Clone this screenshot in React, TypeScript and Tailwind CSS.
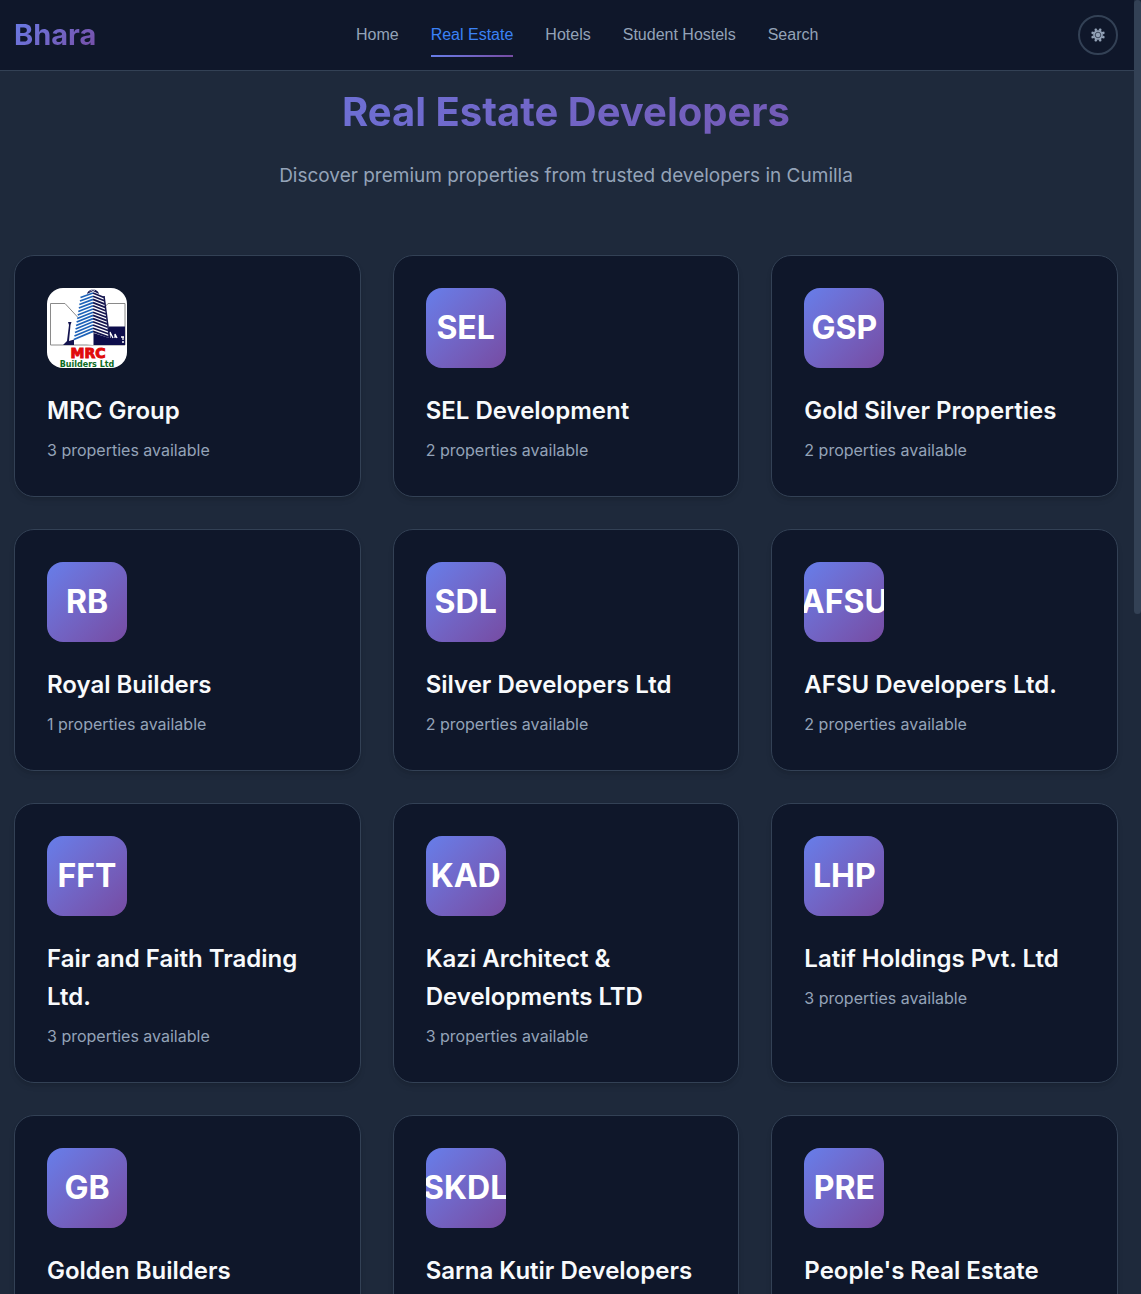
const links = ["Home", "Real Estate", "Hotels", "Student Hostels", "Search"];

const developers = [
  { initials: "MRC", name: "MRC Group", count: 3 },
  { initials: "SEL", name: "SEL Development", count: 2 },
  { initials: "GSP", name: "Gold Silver Properties", count: 2 },
  { initials: "RB", name: "Royal Builders", count: 1 },
  { initials: "SDL", name: "Silver Developers Ltd", count: 2 },
  { initials: "AFSU", name: "AFSU Developers Ltd.", count: 2 },
  { initials: "FFT", name: "Fair and Faith Trading Ltd.", count: 3 },
  { initials: "KAD", name: "Kazi Architect & Developments LTD", count: 3 },
  { initials: "LHP", name: "Latif Holdings Pvt. Ltd", count: 3 },
  { initials: "GB", name: "Golden Builders", count: 2 },
  { initials: "SKDL", name: "Sarna Kutir Developers", count: 2 },
  { initials: "PRE", name: "People's Real Estate", count: 2 },
];

const floors = Array.from({ length: 13 }, (_, i) => i);
const teeth = [22.5, 67.5, 112.5, 157.5, 202.5, 247.5, 292.5, 337.5];

function MrcLogo() {
  return (
    <svg viewBox="0 0 80 80" className="size-20 rounded-2xl bg-white" role="img" aria-label="MRC Builders Ltd">
      <path d="M31 29.500 18 15.500H3.500V57H78V15.500H61L57 20" fill="none" stroke="#8a8a8a" />
      <path d="M62 38.500H78V57H58Z" fill="#0d0d4a" />
      <path d="M63 50V44l3 6M68 50v-4l2 4M74 49h3M76 49v3M75 54h2" fill="none" stroke="#fff" strokeWidth="1.300" />
      <path d="M21 34h3.500l-1 3-1.500 16 5-1.500V57H16l4-4 2-16Z" fill="#14144f" />
      <path d="M34 9 46 3 57 9 62 51 46 57 27 54Z" fill="#fff" />
      <path d="M40 6C41 0 51 0 52 6L46 3Z" fill="#14144f" />
      <path d="M43 3.500C44 1.500 47 1.500 48 2.500" stroke="#fff" strokeWidth="0.800" fill="none" />
      <path d="M46.500 45 62 50 66 57H46.500Z" fill="#0d0d4a" />
      {floors.map((i) => {
        const y = 5 + i * 3.2;
        const left = 33.5 - i * 0.55;
        const right = 57 + i * 0.4;
        return (
          <g key={i} fill="none" strokeWidth="1.700">
            <path d={`M${left} ${y + 4.5 + i * 0.3} L46 ${y}`} stroke="#1d62b8" />
            <path d={`M46 ${y} L${right} ${y + 4.5 + i * 0.1}`} stroke="#14144f" />
          </g>
        );
      })}
      <path d="M57 8 62.500 50" stroke="#14144f" strokeWidth="1.500" />
      <text x="41" y="70" textAnchor="middle" className="fill-[#e00b0b] font-['DejaVu_Sans',sans-serif] text-[14px] font-bold" stroke="#e00b0b">MRC</text>
      <text x="40" y="79" textAnchor="middle" className="fill-[#0b6b22] font-['DejaVu_Sans',sans-serif] text-[8px] font-bold">Builders Ltd</text>
    </svg>
  );
}

function GearIcon() {
  return (
    <svg viewBox="-8 -8 16 16" className="size-4" aria-hidden="true">
      <circle r="4.800" fill="#94a3b8" />
      {teeth.map((angle) => (
        <path key={angle} d="M-1.500-4.500-.900-7H.900L1.500-4.500Z" transform={`rotate(${angle})`} fill="#94a3b8" />
      ))}
      <circle r="2.800" fill="none" stroke="#0f172a" strokeOpacity="0.650" />
    </svg>
  );
}

export default function App() {
  return (
    <div className="h-screen overflow-y-auto bg-[#1e293b] font-['Inter',sans-serif] text-[#f8fafc] [scrollbar-width:none]">
      <header className="sticky top-0 z-10 border-b border-[#334155] bg-[#0f172a] pr-[23px] pl-3.5">
        <div className="flex h-[70px] items-center justify-between">
          <a href="#" className="bg-linear-135 from-[#667eea] to-[#764ba2] bg-clip-text text-[29px] leading-[46px] font-bold text-transparent">
            Bhara
          </a>
          <nav className="flex gap-8 font-['Liberation_Sans',sans-serif] text-base">
            {links.map((label) => {
              const active = label === "Real Estate";
              return (
                <a key={label} href="#" aria-current={active ? "page" : undefined} className={active ? "relative py-2 text-[#3b82f6]" : "py-2 text-[#94a3b8]"}>
                  {label}
                  {active && <span className="absolute inset-x-0 -bottom-0.5 h-0.5 bg-linear-135 from-[#667eea] to-[#764ba2]" />}
                </a>
              );
            })}
          </nav>
          <button aria-label="Toggle theme" className="flex size-10 items-center justify-center rounded-full border-2 border-[#334155]">
            <GearIcon />
          </button>
        </div>
      </header>

      <main className="pt-[9px] pr-[23px] pb-16 pl-3.5">
        <div className="mb-[63px] text-center">
          <h1 className="mb-4 bg-linear-135 from-[#667eea] to-[#764ba2] bg-clip-text text-[40px] leading-16 font-bold text-transparent">
            Real Estate Developers
          </h1>
          <p className="text-[19px] leading-8 text-[#94a3b8]">Discover premium properties from trusted developers in Cumilla</p>
        </div>
        <div className="grid grid-cols-3 gap-8">
          {developers.map((dev) => (
            <article key={dev.name} className="rounded-[20px] border border-[#334155] bg-[#0f172a] px-8 pt-8 pb-[34px] shadow-md">
              {dev.initials === "MRC" ? (
                <MrcLogo />
              ) : (
                <div className="flex size-20 items-center justify-center overflow-hidden rounded-2xl bg-linear-135 from-[#667eea] to-[#764ba2] text-[32px] font-bold text-white">
                  {dev.initials}
                </div>
              )}
              <h2 className="mt-6 mb-2 text-2xl leading-[38px] font-semibold">{dev.name}</h2>
              <p className="text-base leading-6 text-[#94a3b8]">{dev.count} properties available</p>
            </article>
          ))}
        </div>
      </main>

      <div aria-hidden="true" className="fixed inset-y-0 right-0 z-20 w-[7px] bg-[#1e293b]">
        <div className="h-[614px] rounded bg-[#334155]" />
      </div>
    </div>
  );
}
